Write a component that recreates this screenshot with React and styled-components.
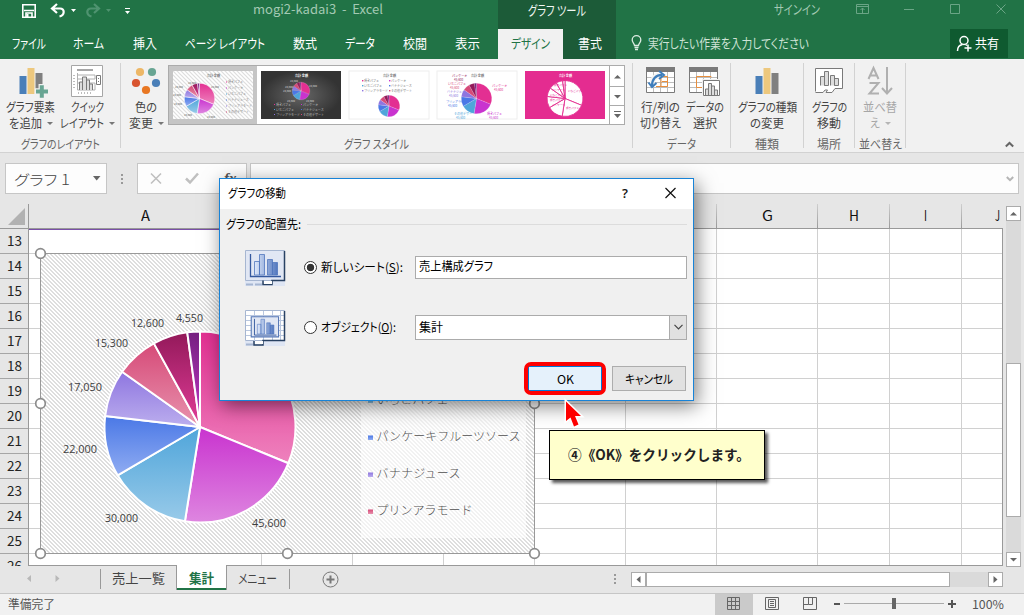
import React, { useLayoutEffect, useRef, useState } from "react";
import styled, { createGlobalStyle, css } from "styled-components";

const Global = createGlobalStyle`
  * { box-sizing: border-box; }
  html, body { margin: 0; padding: 0; overflow: hidden; background: #e6e6e6; }
  body { font-family: "Open Sans", "Noto Sans CJK JP", sans-serif; font-size: 12px; color: #444; }
`;

/* Text condensed or widened to a fixed run width, like the UI font's narrow kana */
const FitBox = styled.span`
  display: block;
  flex: none;
  width: ${(p) => p.$w}px;
  height: 16px;
  line-height: 16px;
  white-space: nowrap;
  font-family: "Noto Sans CJK JP", sans-serif;
  font-size: ${(p) => p.$size || 12}px;
  font-weight: ${(p) => p.$weight || 400};
  color: ${(p) => p.$color || "inherit"};
  font-feature-settings: ${(p) => (p.$full ? "normal" : '"palt"')};
`;
const FitInner = styled.span`
  display: inline-block;
  transform-origin: 0 50%;
  white-space: pre;
`;
function Fit({ w, size, weight, color, full, children }) {
  const ref = useRef(null);
  const [k, setK] = useState(1);
  useLayoutEffect(() => {
    if (ref.current.offsetWidth) setK(w / ref.current.getBoundingClientRect().width);
  }, []);
  return (
    <FitBox $w={w} $size={size} $weight={weight} $color={color} $full={full}>
      <FitInner ref={ref} style={{ transform: `scaleX(${k})` }}>{children}</FitInner>
    </FitBox>
  );
}

const Window = styled.div`
  position: relative;
  width: 1024px;
  height: 615px;
  overflow: hidden;
  display: flex;
  flex-direction: column;
  background: #e6e6e6;
`;
const Icon = styled.svg`
  display: block;
  flex: none;
  overflow: visible;
`;

/* ---------- title and tabs ---------- */
const TitleBar = styled.header`
  display: flex;
  height: 29px;
  background: #217346;
`;
const QuickAccess = styled.div`
  width: 253px;
`;
const TitleText = styled.div`
  width: 245px;
  padding-top: 1px;
`;
const ToolTitle = styled.div`
  width: 118px;
  padding-top: 2px;
  display: flex;
  justify-content: center;
  background: #1c5b38;
`;
const SignIn = styled.div`
  width: 204px;
  padding: 1px 0 0 158px;
`;
const TabBar = styled.nav`
  display: flex;
  height: 30px;
  background: #217346;
`;
const Tab = styled.div`
  width: ${(p) => p.$w}px;
  height: 30px;
  display: flex;
  justify-content: center;
  padding-top: 6px;
  margin-left: ${(p) => p.$gap || 0}px;
  color: #fff;
  ${(p) => p.$tone === "active" && css`background: #f1f1f1; color: #217346;`}
  ${(p) => p.$tone === "dark" && css`background: #1c5b38;`}
`;
const TellMe = styled.div`
  display: flex;
  width: 334px;
  padding: 6px 0 0 15px;
  gap: 6px;
`;
const Share = styled.div`
  display: flex;
  width: 58px;
  height: 29px;
  padding: 6px 0 0 6px;
  gap: 3px;
  background: #0f5a30;
`;

/* ---------- ribbon ---------- */
const Ribbon = styled.section`
  display: flex;
  height: 94px;
  background: #f1f1f1;
  border-bottom: 1px solid #d2d2d2;
  padding-top: 4px;
  position: relative;
`;
const Group = styled.div`
  width: ${(p) => p.$w}px;
  height: 85px;
  border-right: 1px solid #d2d2d2;
  display: flex;
  flex-direction: column;
  align-items: center;
`;
const Tools = styled.div`
  display: flex;
  flex: none;
  width: 100%;
  height: 73px;
  justify-content: ${(p) => (p.$center ? "center" : "flex-start")};
`;
const Tool = styled.div`
  width: ${(p) => p.$w}px;
  padding-left: ${(p) => p.$pl || 0}px;
  display: flex;
  flex-direction: column;
  align-items: center;
  color: ${(p) => (p.$off ? "#a6a6a6" : "#444")};
`;
const ToolIcon = styled.div`
  height: 36px;
`;
const ToolLine = styled.div`
  display: flex;
  align-items: center;
  height: 16px;
  gap: 5px;
`;
const Caret = styled.i`
  border: 3px solid transparent;
  border-top-color: ${(p) => p.$c || "#777"};
  border-bottom: 0;
`;
const Gallery = styled.div`
  display: flex;
  width: 457px;
  height: 60px;
  margin-top: 2px;
  border: 1px solid #ababab;
  background: #fff;
`;
const Thumb = styled.div`
  width: 88px;
  height: 58px;
  padding: 5px 4px;
  background: ${(p) => (p.$on ? "#c5c5c5" : "#fff")};
`;
const GalleryNav = styled.div`
  width: 15px;
  margin-left: auto;
  border-left: 1px solid #ababab;
  display: grid;
  grid-template-rows: 21px 19px 1fr;
`;
const NavCell = styled.div`
  display: flex;
  align-items: center;
  justify-content: center;
  border-bottom: ${(p) => (p.$last ? 0 : "1px solid #ababab")};
`;
const Collapse = styled.div`
  padding: 76px 0 0 99px;
`;

/* ---------- formula bar ---------- */
const FormulaBar = styled.section`
  display: flex;
  height: 51px;
  padding: 10px 5px 0;
`;
const Box = styled.div`
  display: flex;
  align-items: center;
  width: ${(p) => p.$w}px;
  height: 31px;
  margin-right: ${(p) => p.$mr || 0}px;
  border: 1px solid #c6c6c6;
  background: #fdfdfd;
  padding-left: 8px;
`;
const Spacer = styled.div`
  flex: 1;
`;

/* ---------- sheet ---------- */
const SheetArea = styled.main`
  position: relative;
  display: flex;
  height: 362px;
`;
const RowHeads = styled.div`
  width: 29px;
  height: 362px;
  overflow: hidden;
  border-right: 1px solid #999;
`;
const Corner = styled.div`
  height: 25px;
  border-bottom: 1px solid #999;
  padding: 4px 0 0 8px;
`;
const RowHead = styled.div`
  height: 25px;
  padding: 3px 0 0 7px;
  border-bottom: 1px solid #a6a6a6;
  color: #222;
`;
const SheetMain = styled.div`
  width: 974px;
`;
const ColHeads = styled.div`
  display: flex;
  height: 25px;
  overflow: hidden;
  border-bottom: 1px solid #999;
`;
const ColHead = styled.div`
  flex: none;
  width: ${(p) => p.$w}px;
  display: flex;
  justify-content: center;
  padding-top: 3px;
  color: #111;
  border-right: 1px solid;
  border-image: linear-gradient(#d0d0d0, #999) 1;
`;
const Cells = styled.div`
  height: 337px;
  overflow: hidden;
  background: #fff;
  border-right: 1px solid #999;
  border-bottom: 1px solid #999;
  display: grid;
  grid-template-columns: 233px 91px 91px 91px 91px 91px 101px 72px 72px 72px;
  grid-auto-rows: 25px;
`;
const Cell = styled.div`
  border-right: 1px solid #d0d0d0;
  border-bottom: 1px solid #d0d0d0;
`;
const RangeEdge = styled.div`
  position: absolute;
  left: 29px;
  top: 25px;
  width: 520px;
  height: 1px;
  background: #7a4fa8;
`;
const ChartObject = styled.div`
  position: absolute;
  left: 40px;
  top: 49px;
`;
const VScroll = styled.div`
  width: 15px;
  height: 361px;
  margin: 2px 0 0 3px;
  display: flex;
  flex-direction: column;
  background: #dadada;
`;
const ScrollButton = styled.div`
  flex: none;
  width: 15px;
  height: 15px;
  display: flex;
  align-items: center;
  justify-content: center;
  background: #fff;
  border: 1px solid #ababab;
`;
const VThumb = styled.div`
  height: 154px;
  margin: 142px 0 auto;
  background: #fff;
  border: 1px solid #ababab;
`;

/* ---------- sheet tabs ---------- */
const SheetTabs = styled.div`
  display: flex;
  height: 27px;
`;
const SheetArrows = styled.div`
  width: 100px;
  height: 24px;
  padding: 8px 0 0 26px;
`;
const SheetTab = styled.div`
  width: ${(p) => p.$w}px;
  height: 24px;
  padding: 4px 0 0 ${(p) => p.$pl}px;
  position: relative;
  ${(p) =>
    p.$on &&
    css`
      margin-top: -1px;
      padding-top: 5px;
      height: 25px;
      background: #fff;
      border: solid #999;
      border-width: 0 1px;
      box-shadow: inset 0 -2px #217346;
    `}
`;
const TabRule = styled.div`
  width: 1px;
  height: 20px;
  margin-top: 3px;
  background: #999;
`;
const AddSheet = styled.div`
  padding: 5px 0 0 32px;
  width: 324px;
`;
const HScroll = styled.div`
  display: flex;
  width: 372px;
  height: 15px;
  margin: 6px 0 0 15px;
  background: #dadada;
`;
const HThumb = styled.div`
  width: 304px;
  margin-right: auto;
  background: #fff;
  border: 1px solid #ababab;
`;
const StatusBar = styled.footer`
  display: flex;
  height: 22px;
  background: #f1f1f1;
  border-top: 1px solid #c6c6c6;
`;
const StatusText = styled.div`
  width: 715px;
  padding: 2px 0 0 8px;
  color: #555;
`;
const ViewButton = styled.div`
  width: 38px;
  padding: 3px 0 0 12px;
  background: ${(p) => (p.$on ? "#cacaca" : "transparent")};
`;
const Zoom = styled.div`
  display: flex;
  padding: 2px 0 0 8px;
  gap: 15px;
  color: #555;
`;

/* ---------- dialog ---------- */
const Dialog = styled.div`
  position: absolute;
  left: 219px;
  top: 178px;
  width: 475px;
  height: 223px;
  border: 1px solid #1883d7;
  background: #f0f0f0;
  color: #000;
  box-shadow: 3px 5px 18px rgba(0, 0, 0, 0.5);
`;
const DialogTitle = styled.div`
  display: flex;
  height: 30px;
  padding: 6px 17px 0 8px;
  background: #fff;
`;
const SectionTitle = styled.div`
  display: flex;
  align-items: center;
  height: 30px;
  margin-bottom: -2px;
  padding: 0 6px;
  gap: 6px;
`;
const Rule = styled.div`
  flex: 1;
  height: 1px;
  background: #dcdcdc;
`;
const Option = styled.div`
  display: flex;
  align-items: center;
  height: 60px;
  padding-left: 25px;
`;
const OptionPicture = styled.div`
  padding-top: 2px;
`;
const Radio = styled.span`
  width: 13px;
  height: 13px;
  margin: 0 4px 0 19px;
  border: 1px solid #333;
  border-radius: 50%;
  background: ${(p) => (p.$on ? "radial-gradient(#333 0 3.4px, #fff 4.1px)" : "#fff")};
`;
const OptionLabel = styled.div`
  width: 94px;
`;
const Field = styled.div`
  display: flex;
  width: 272px;
  height: ${(p) => p.$h}px;
  border: 1px solid #ababab;
  background: #fff;
  padding: ${(p) => p.$pt}px 0 0 3px;
`;
const DropButton = styled.div`
  width: 18px;
  height: ${(p) => p.$h}px;
  margin: -4px -1px 0 auto;
  display: flex;
  align-items: center;
  justify-content: center;
  background: #e1e1e1;
  border: 1px solid #ababab;
`;
const Actions = styled.div`
  display: flex;
  justify-content: flex-end;
  padding: 5px 7px 0 0;
  gap: 6px;
`;
const OkRing = styled.div`
  width: 82px;
  height: 33px;
  border: 4px solid #fe0000;
  border-radius: 7px;
  background: #0078d7;
  padding: 1px;
`;
const Button = styled.div`
  display: flex;
  align-items: center;
  justify-content: center;
  width: ${(p) => p.$w}px;
  height: ${(p) => p.$h}px;
  margin-top: ${(p) => p.$mt || 0}px;
  background: ${(p) => (p.$primary ? "#e5f1fb" : "#e1e1e1")};
  border: ${(p) => (p.$primary ? 0 : "1px solid #adadad")};
`;
const Callout = styled.div`
  position: absolute;
  left: 549px;
  top: 430px;
  width: 216px;
  height: 50px;
  display: flex;
  align-items: center;
  padding: 0 0 2px 18px;
  color: #222;
  background: #ffffcc;
  border: 1px solid #000;
  box-shadow: 3px 3px 3px rgba(0, 0, 0, 0.65);
`;
const Pointer = styled.svg`
  position: absolute;
  left: 563px;
  top: 397px;
`;

/* ---------- drawings ---------- */
const slices = [
  [66700, "#e32f92", "#ee82bd"],
  [45600, "#c933cf", "#de86e0"],
  [30000, "#4fa5da", "#98cae9"],
  [22000, "#4a78e6", "#90acf2"],
  [17050, "#8e76e0", "#bcaeee"],
  [15300, "#d64a78", "#e893ae"],
  [12600, "#93195a", "#e23d98"],
  [4550, "#752080", "#c33bc9"],
];
function wedges(cx, cy, r) {
  const total = slices.reduce((s, x) => s + x[0], 0);
  let a = 0;
  return slices.map(([v]) => {
    const b = a + (v / total) * 2 * Math.PI;
    const d = `M${cx} ${cy}L${cx + r * Math.sin(a)} ${cy - r * Math.cos(a)}A${r} ${r} 0 0 1 ${cx + r * Math.sin(b)} ${cy - r * Math.cos(b)}Z`;
    a = b;
    return d;
  });
}
function Pie({ cx, cy, r, grad, mono, sw = 0 }) {
  return wedges(cx, cy, r).map((d, i) => (
    <path key={i} d={d} fill={mono || (grad ? `url(#slice${i})` : slices[i][1])} stroke={mono ? "#e42c90" : "#fff"} strokeWidth={sw} strokeLinejoin="round" />
  ));
}

const dataLabels = [
  ["4,550", 176, 318, 27],
  ["12,600", 131, 323, 33],
  ["15,300", 95, 343, 33],
  ["17,050", 68, 387, 34],
  ["22,000", 63, 449, 34],
  ["30,000", 105, 518, 33],
  ["45,600", 252, 523, 34],
];
const legend = [
  ["いちごパフェ", 399, 72, 2],
  ["パンケーキフルーツソース", 436, 144, 3],
  ["バナナジュース", 473, 84, 4],
  ["プリンアラモード", 510, 96, 5],
];
const handles = [[40, 253], [40, 403], [40, 553], [287, 553], [534, 403], [534, 553]];

function PieChart() {
  return (
    <Icon width="495" height="301" viewBox="40 253 495 301">
      <defs>
        <pattern id="hatch" width="4" height="4" patternUnits="userSpaceOnUse">
          <rect width="4" height="4" fill="#fff" />
          <path d="M0 0h2v1h-2zM1 1h2v1h-2zM2 2h2v1h-2zM3 3h1v1h-1zM0 3h1v1h-1z" fill="#dedede" />
        </pattern>
        {slices.map(([, a, b], i) => (
          <linearGradient key={i} id={`slice${i}`} x1="0" y1="0" x2="0" y2="1">
            <stop offset="0" stopColor={a} />
            <stop offset="1" stopColor={b} />
          </linearGradient>
        ))}
      </defs>
      <rect x="40.5" y="253.5" width="494" height="300" fill="url(#hatch)" stroke="#999" />
      <rect x="361" y="285" width="165" height="253" fill="#fff" opacity="0.6" />
      <Pie cx={200} cy={427} r={95.5} grad sw={2} />
      <g fontFamily="'Open Sans', sans-serif" fontSize="11" fill="#404040">
        {dataLabels.map(([t, x, y, w]) => (
          <text key={t} x={x} y={y + 4} textLength={w} lengthAdjust="spacingAndGlyphs">{t}</text>
        ))}
      </g>
      <g fontFamily="'Noto Sans CJK JP', sans-serif" fontSize="12" fontWeight="300" fill="#505050">
        {legend.map(([t, y, w, i]) => (
          <g key={t}>
            <rect x="368" y={y - 0.5} width="5" height="4.5" fill={`url(#slice${i})`} />
            <text x="376.5" y={y + 5} textLength={w} lengthAdjust="spacing">{t}</text>
          </g>
        ))}
      </g>
      {handles.map(([x, y]) => (
        <circle key={`${x}-${y}`} cx={x + 0.5} cy={y + 0.5} r="4.8" fill="#fff" stroke="#8c8c8c" strokeWidth="1.7" />
      ))}
    </Icon>
  );
}

const styleNames = ["焼きパフェ", "パンケーキ", "いちごパフェ", "バナナジュース", "プリンアラモード", "その他デザート"];
function StyleThumb({ kind }) {
  const dark = kind === 1;
  const solid = kind === 4;
  const fg = dark || solid ? "#fff" : "#777";
  const pies = [[26.5, 27.5, 15.3], [40, 20, 8.8], [40, 35, 10.8], [39.5, 27.5, 15.3], [40, 27.5, 18]];
  const [cx, cy, r] = pies[kind];
  const spots = {
    0: [[38, 15, 0], [2, 15, 0], [0, 23, 0], [1, 32, 0], [11, 43, 0], [34, 45, 0], [15, 11, 0]],
    1: [[48, 14, 0], [24, 15, 0], [22, 19, 0], [26, 29, 0], [45, 29, 0], [29, 9, 0]],
    3: [[55, 14, 0], [11, 12, 5], [10, 20, 4], [9, 30, 3], [17, 42, 2], [50, 42, 1], [15, 4, 6]],
  }[kind] || [];
  return (
    <Icon width="80" height="48" viewBox="0 0 80 48">
      <defs>
        <radialGradient id="darkbg"><stop offset="0" stopColor="#666" /><stop offset="1" stopColor="#333" /></radialGradient>
        <pattern id="thumbHatch" width="4" height="4" patternUnits="userSpaceOnUse">
          <rect width="4" height="4" fill="#fff" />
          <path d="M-1 -1L5 5M-1 3L1 5M3 -1L5 1" stroke="#dedede" strokeWidth="1.2" />
        </pattern>
      </defs>
      <rect width="80" height="48" fill={["url(#thumbHatch)", "url(#darkbg)", "#fff", "#fff", "#e42c90"][kind]} stroke={kind > 1 && !solid ? "#eee" : "none"} />
      <Pie cx={cx} cy={cy} r={r} mono={solid && "#fff"} grad={kind === 0} sw={solid ? 0.9 : kind === 0 ? 0.5 : 0.15} />
      <g fontFamily="'Noto Sans CJK JP', sans-serif" fontSize="3">
        <text x="34" y="5.5" fontSize="3.6" fontWeight="700" textLength="13" lengthAdjust="spacingAndGlyphs" fill={fg}>合計 金額</text>
        {kind === 0 && styleNames.map((n, i) => (
          <g key={n}><rect x="53" y={10.5 + i * 6} width="1" height="1" fill={slices[i][1]} /><text x="55" y={12 + i * 6} fill="#888">{n}</text></g>
        ))}
        {kind === 1 && styleNames.map((n, i) => (
          <g key={n}><rect x={13 + (i % 2) * 27} y={33 + (i >> 1) * 5} width="1" height="1" fill={slices[i][1]} /><text x={15 + (i % 2) * 27} y={35 + (i >> 1) * 5} fill="#bbb">{n}</text></g>
        ))}
        {kind === 2 && styleNames.map((n, i) => (
          <g key={n}><rect x={13 + (i % 2) * 27} y={9 + (i >> 1) * 5} width="1.4" height="1.4" fill={slices[i][1]} /><text x={15 + (i % 2) * 27} y={11 + (i >> 1) * 5} fill="#777">{n}</text></g>
        ))}
        {spots.map(([x, y, c], i) => (
          <text key={i} x={x} y={y + 2} fontSize={kind === 3 ? 3 : 2.6} fill={kind === 3 ? slices[c][1] : dark ? "#ddd" : "#555"}>{kind === 3 ? styleNames[(i + 1) % 6].slice(0, 6) : "15,300"}</text>
        ))}
        {kind === 3 && spots.map(([x, y, c], i) => <text key={`v${i}`} x={x + 2} y={y + 5.500} fill={slices[c][1]}>45,600</text>)}
        {solid && [[29, 15], [27, 20], [25, 25], [25, 30], [27, 35], [43, 21], [41, 38], [32, 11]].map(([x, y], i) => (
          <text key={i} x={x} y={y} fontSize="2.6" fill="#e42c90">{styleNames[i % 3]}</text>
        ))}
      </g>
    </Icon>
  );
}

const Bars = ({ plus }) => (
  <Icon width="32" height="32">
    <path d="M4.500 13h7v18h-7z" fill="#4a7fb8" /><path d="M12.500 5h7v26h-7z" fill="#edc87e" /><path d="M20.500 10h7v21h-7z" fill="#808080" />
    {plus && <><path d="M21 26.500h3.800v-4.300h4v4.300H33v4h-4.200v4.300h-4v-4.300H21z" fill="#f1f1f1" stroke="#f1f1f1" strokeWidth="2.500" /><path d="M21 26.500h3.800v-4.300h4v4.300H33v4h-4.200v4.300h-4v-4.300H21z" fill="#68a593" /></>}
  </Icon>
);
const QuickLayout = () => (
  <Icon width="33" height="32" fill="none" stroke="#7a7a7a">
    <path d="M.5 2.500h31v31H.5z" fill="#fff" stroke="#a6a6a6" /><path d="M6 7h16" stroke="#a6a6a6" strokeWidth="2" />
    <path d="M6.500 10v17H24M6 12h18v4M6 16h18M6 20h18v7" stroke="#b0b0b0" /><path d="M8.500 27v-8h3v8M11.500 27V14h4v13M15.500 27V17h3v10M18.500 27v-6h3v6" fill="#ddd" />
    <path d="M25.500 12.500h4v9h-4zM27 15.500h1M27 18.500h1" /><path d="M3 12v15M7 30h14" strokeDasharray="1 2" />
  </Icon>
);
const ColorDots = () => (
  <Icon width="32" height="32">
    <circle cx="10" cy="9" r="4.100" fill="#edb766" /><circle cx="22" cy="9" r="4.100" fill="#68a593" /><circle cx="6" cy="20" r="4.100" fill="#d8542f" />
    <circle cx="26" cy="20" r="4.100" fill="#4a7fb8" /><circle cx="16" cy="27" r="4.100" fill="#e87722" />
  </Icon>
);
const TableBase = ({ w = 28 }) => (
  <g fill="none">
    <path d={`M.5 4.500h${w}v25H.5z`} fill="#fff" stroke="#7a7a7a" /><path d={`M0 4h${w + 1}v5H0z`} fill="#7a7a7a" />
    <path d={`M7.500 9v20M14.500 9v20M21.500 9v20M1 14.500h${w - 1}M1 19.500h${w - 1}M1 24.500h${w - 1}`} stroke="#bdbdbd" />
  </g>
);
const SwapIcon = () => (
  <Icon width="30" height="32" fill="none">
    <TableBase />
    <path d="M10 23.500h11.500V13.500H15v10M16 18.500h5.500" stroke="#e88e3c" />
    <path d="M6 22C6 15 10 12 16 12" stroke="#f4f4f4" strokeWidth="5" /><path d="M6 23C6 16 10 12 16 12" stroke="#3f7ebc" strokeWidth="2.300" />
    <path d="M13 8l5 4-5 4M2.500 19.500L6 24l4.500-4" stroke="#3f7ebc" strokeWidth="2" />
  </Icon>
);
const SelectIcon = () => (
  <Icon width="32" height="32" fill="none">
    <TableBase /><path d="M22 14.500V13.500H7.500v11H14" stroke="#e88e3c" />
    <path d="M13 16h18v18H13z" fill="#f1f1f1" /><path d="M14.500 17.500h16v15h-16z" fill="#fff" stroke="#7a7a7a" />
    <path d="M16.500 32v-6h3v6M19.500 32V20.500h3V32M22.500 32v-9h3v9M25.500 32v-5h3v5" fill="#ddd" stroke="#7a7a7a" />
  </Icon>
);
const MoveIcon = () => (
  <Icon width="28" height="32" fill="none" stroke="#7a7a7a">
    <path d="M.5 28.500V5.500h27v20H20l-3 4h-6l1.500-2.500H10L8 29.500H.5" fill="#fff" /><path d="M5.500 22.500v-9h4v9M9.500 22.500V8.500h4v14h-4M15.500 22.500v-10h4v10M19.500 22.500v-7h4v7z" fill="#ddd" />
  </Icon>
);
const SortIcon = () => (
  <Icon width="26" height="32" fill="none" stroke="#b0b0b0" strokeWidth="2">
    <path d="M1.500 16L6.500 5l5 11M3 12.500h7M2.500 20h9l-9 10.500h9.500" /><path d="M20 4v26M15 25l5 5.500 5-5.500" />
  </Icon>
);
const SheetIcon = ({ object }) => (
  <Icon width="40" height="36" fill="none">
    <defs><linearGradient id="bar"><stop offset="0" stopColor="#dfe9fb" /><stop offset="1" stopColor="#5277be" /></linearGradient></defs>
    <path d="M0 31h40v5H0z" fill="#dfe6f4" /><path d="M.5.5h39v30H.5z" fill={object ? "#fff" : "#e1e7f4"} stroke="#a6b6d1" />
    {object && <path d="M9.500 1v30M18.500 1v30M27.500 1v30M35.500 1v30M1 5.500h38M1 10.500h38M1 15.500h38M1 20.500h38M1 25.500h38" stroke="#b9c7df" />}
    <path d={object ? "M39.500 1v29.500H18V35h-9v-4" : "M39.500 1v29.500H27V34.500h-9v-4"} stroke="#294263" strokeWidth="1.500" />
    <path d={object ? "M10 31h8v3h-8z" : "M19 31h8v3h-8z"} fill="#fff" /><path d={object ? "M1 34.500h7" : "M1 34.500h7M10 34.500h7"} stroke="#a6b6d1" strokeWidth="2" />
    <g transform={object ? "translate(5.500 6) scale(.72)" : ""}>
      {object && <path d="M1 1h38v28H1z" fill="#e1e7f4" stroke="#5476b5" strokeWidth="1.500" />}
      <path d="M5.500 4v22.500H36" stroke="#35599f" strokeWidth="1.300" />
      <path d="M9.500 11.500h5V25h-5zM14.500 4.500h5V25h-5zM22.500 9.500h5V25h-5zM27.500 12.500h5V25h-5z" fill="url(#bar)" stroke="#5277be" strokeWidth=".8" />
    </g>
  </Icon>
);
const Triangle = ({ dir, c = "#666" }) => (
  <Icon width="7" height="7" fill={c}><path d={{ up: "M0 5.500h7L3.500 2z", down: "M0 2h7L3.500 5.500z", left: "M5.500 0v7L1.500 3.500z", right: "M1.500 0v7L5.500 3.500z" }[dir]} /></Icon>
);

const columns = [["A", 233], ["B", 91], ["C", 91], ["D", 91], ["E", 91], ["F", 91], ["G", 101], ["H", 72], ["I", 72], ["J", 72]];
const letterWidths = { G: 11, H: 10, I: 3, J: 5 };
const tabs = [["ファイル", 58, 34], ["ホーム", 61, 31], ["挿入", 52, 24], ["ページ レイアウト", 107, 80], ["数式", 53, 24], ["データ", 58, 30], ["校閲", 52, 24], ["表示", 53, 25]];

export default function App() {
  return (
    <Window>
      <Global />
      <TitleBar>
        <QuickAccess>
          <Icon width="140" height="24" fill="none" stroke="#fff">
            <path d="M22.800 4.800h12.400v12.400H22.800z" strokeWidth="1.600" /><path d="M24 10.500h10M26 17v-4h6v4" strokeWidth="1.600" /><path d="M26.500 14h2v3h-2z" fill="#fff" stroke="none" />
            <path d="M57 4l-5 4.500L57 13M52.500 8.500H60c5 0 5 6.500-.5 8" strokeWidth="2.200" />
            <path d="M94 4l5 4.500L94 13M98.500 8.500H91c-5 0-5 6.500 .5 8" strokeWidth="2.200" stroke="#4f9370" />
            <path d="M71 9h5l-2.500 3zM125 11h5l-2.500 3z" fill="#fff" stroke="none" /><path d="M106 9h5l-2.500 3z" fill="#4f9370" stroke="none" /><path d="M125 8.500h5" />
          </Icon>
        </QuickAccess>
        <TitleText><Fit w={130} size={13} color="#a3c9b3">mogi2-kadai3  -  Excel</Fit></TitleText>
        <ToolTitle><Fit w={58} size={13} color="#f2f8f4">グラフ ツール</Fit></ToolTitle>
        <SignIn><Fit w={46} size={13} color="#a3c9b3">サインイン</Fit></SignIn>
        <Icon width="204" height="29" viewBox="820 0 204 29" fill="none" stroke="#6ba586">
          <path d="M856.500 4.500h12v9h-12zM857 6.500h11M862.500 13V8M860.500 10l2-2 2 2M904 9.500h10M950.500 4.500h9v9h-9zM996.500 4.500l9 9M1005.500 4.500l-9 9" />
        </Icon>
      </TitleBar>
      <TabBar>
        {tabs.map(([t, w, tw]) => <Tab key={t} $w={w}><Fit w={tw} size={13}>{t}</Fit></Tab>)}
        <Tab $w={65} $gap={4} $tone="active"><Fit w={39} size={13}>デザイン</Fit></Tab>
        <Tab $w={53} $tone="dark"><Fit w={24} size={13}>書式</Fit></Tab>
        <TellMe>
          <Icon width="11" height="16" fill="none" stroke="#dcebe2" strokeWidth="1.300"><path d="M3.500 10.500C3.500 8.500 1.200 7.500 1.200 5a4.300 4.300 0 0 1 8.600 0c0 2.500-2.300 3.500-2.300 5.500zM3.500 12.500h4M4 14.500h3" /></Icon>
          <Fit w={161} size={13} color="#cfe3d7">実行したい作業を入力してください</Fit>
        </TellMe>
        <Share>
          <Icon width="16" height="17" fill="none" stroke="#fff" strokeWidth="1.500"><circle cx="8" cy="5.500" r="4" /><path d="M1.500 16c0-3.500 2-6 5-6.500M9.500 9.500l1.500 1M8.500 13h7M12 9.500v7" /></Icon>
          <Fit w={24} size={13} color="#fff">共有</Fit>
        </Share>
      </TabBar>

      <Ribbon>
        <Group $w={121}>
          <Tools>
            <Tool $w={61}><ToolIcon><Bars plus /></ToolIcon><ToolLine><Fit w={49}>グラフ要素</Fit></ToolLine><ToolLine><Fit w={33}>を追加</Fit><Caret /></ToolLine></Tool>
            <Tool $w={53}><ToolIcon><QuickLayout /></ToolIcon><ToolLine><Fit w={33}>クイック</Fit></ToolLine><ToolLine><Fit w={44}>レイアウト</Fit><Caret /></ToolLine></Tool>
          </Tools>
          <Fit w={79} color="#666">グラフのレイアウト</Fit>
        </Group>
        <Group $w={512}>
          <Tools>
            <Tool $w={47} $pl={3}><ToolIcon><ColorDots /></ToolIcon><ToolLine><Fit w={22}>色の</Fit></ToolLine><ToolLine><Fit w={24}>変更</Fit><Caret /></ToolLine></Tool>
            <Gallery>
              {[0, 1, 2, 3, 4].map((k) => <Thumb key={k} $on={k === 0}><StyleThumb kind={k} /></Thumb>)}
              <GalleryNav>
                <NavCell><Triangle dir="up" /></NavCell><NavCell><Triangle dir="down" /></NavCell>
                <NavCell $last><Icon width="7" height="8" fill="#666"><path d="M0 0h7v1H0zM0 3h7L3.500 7z" /></Icon></NavCell>
              </GalleryNav>
            </Gallery>
          </Tools>
          <Fit w={65} color="#666">グラフ スタイル</Fit>
        </Group>
        <Group $w={98}>
          <Tools $center>
            <Tool $w={47}><ToolIcon><SwapIcon /></ToolIcon><ToolLine><Fit w={39}>行/列の</Fit></ToolLine><ToolLine><Fit w={41}>切り替え</Fit></ToolLine></Tool>
            <Tool $w={42}><ToolIcon><SelectIcon /></ToolIcon><ToolLine><Fit w={38}>データの</Fit></ToolLine><ToolLine><Fit w={24}>選択</Fit></ToolLine></Tool>
          </Tools>
          <Fit w={29} color="#666">データ</Fit>
        </Group>
        <Group $w={73}>
          <Tools $center><Tool $w={68}><ToolIcon><Bars /></ToolIcon><ToolLine><Fit w={59}>グラフの種類</Fit></ToolLine><ToolLine><Fit w={34}>の変更</Fit></ToolLine></Tool></Tools>
          <Fit w={24} color="#666">種類</Fit>
        </Group>
        <Group $w={51}>
          <Tools $center><Tool $w={48}><ToolIcon><MoveIcon /></ToolIcon><ToolLine><Fit w={35}>グラフの</Fit></ToolLine><ToolLine><Fit w={24}>移動</Fit></ToolLine></Tool></Tools>
          <Fit w={24} color="#666">場所</Fit>
        </Group>
        <Group $w={51}>
          <Tools $center><Tool $w={48} $off><ToolIcon><SortIcon /></ToolIcon><ToolLine><Fit w={34}>並べ替</Fit></ToolLine><ToolLine><Fit w={10}>え</Fit><Caret $c="#b5b5b5" /></ToolLine></Tool></Tools>
          <Fit w={43} color="#666">並べ替え</Fit>
        </Group>
        <Collapse><Icon width="9" height="9" fill="none" stroke="#666" strokeWidth="2"><path d="M.8 7.500L4.500 4l3.700 3.500" /></Icon></Collapse>
      </Ribbon>

      <FormulaBar>
        <Box $w={102} $mr={14}><Fit w={56} size={14} weight={300} color="#444">グラフ 1</Fit><Spacer /><Icon width="13" height="8" fill="#666"><path d="M0 1h7.500L3.700 5.500z" /></Icon></Box>
        <Icon width="16" height="31" fill="#999"><path d="M0 11h2v2H0zM0 15h2v2H0zM0 19h2v2H0z" /></Icon>
        <Box $w={110} $mr={3}>
          <Icon width="100" height="29" fill="none" stroke="#c0c0c0" strokeWidth="1.600"><path d="M5 9.500l10 10M15 9.500l-10 10" /><path d="M40 14.500l4 4 8-9" strokeWidth="2.500" /><text x="78" y="19" fontFamily="Liberation Serif" fontStyle="italic" fontWeight="700" fontSize="15" fill="#555" stroke="none">fx</text></Icon>
        </Box>
        <Box $w={769}><Spacer /><Icon width="12" height="8" fill="none" stroke="#b5b5b5" strokeWidth="2"><path d="M.8 2L4 5.200 7.200 2" /></Icon></Box>
      </FormulaBar>

      <SheetArea>
        <RowHeads>
          <Corner><Icon width="18" height="17" fill="#b2b2b2"><path d="M17 0v17H0z" /></Icon></Corner>
          {Array.from({ length: 14 }, (_, i) => <RowHead key={i}><Fit w={15} size={14}>{13 + i}</Fit></RowHead>)}
        </RowHeads>
        <SheetMain>
          <ColHeads>{columns.map(([c, w]) => <ColHead key={c} $w={w}><Fit w={letterWidths[c] || 9} size={14}>{c}</Fit></ColHead>)}</ColHeads>
          <Cells>{Array.from({ length: 140 }, (_, i) => <Cell key={i} />)}</Cells>
        </SheetMain>
        <RangeEdge />
        <ChartObject><PieChart /></ChartObject>
        <VScroll>
          <ScrollButton><Triangle dir="up" /></ScrollButton>
          <VThumb />
          <ScrollButton><Triangle dir="down" /></ScrollButton>
        </VScroll>
      </SheetArea>

      <SheetTabs>
        <SheetArrows><Icon width="36" height="10" fill="#b8b8b8"><path d="M5 1v7L1 4.500zM29.500 1v7l4-3.500z" /></Icon></SheetArrows>
        <TabRule />
        <SheetTab $w={75} $pl={11}><Fit w={53} size={13}>売上一覧</Fit></SheetTab>
        <SheetTab $w={51} $pl={12} $on><Fit w={25} size={13} weight={700} color="#217346">集計</Fit></SheetTab>
        <SheetTab $w={62} $pl={11}><Fit w={39} size={13}>メニュー</Fit></SheetTab>
        <TabRule />
        <AddSheet><Icon width="17" height="17" fill="none" stroke="#777"><circle cx="8.500" cy="8.500" r="7.500" /><path d="M4.500 8.500h8M8.500 4.500v8" strokeWidth="2" /></Icon></AddSheet>
        <Icon width="2" height="20" fill="#999"><path d="M0 8h2v2H0zM0 12h2v2H0zM0 16h2v2H0z" /></Icon>
        <HScroll><ScrollButton><Triangle dir="left" /></ScrollButton><HThumb /><ScrollButton><Triangle dir="right" /></ScrollButton></HScroll>
      </SheetTabs>
      <StatusBar>
        <StatusText><Fit w={47}>準備完了</Fit></StatusText>
        <ViewButton $on><Icon width="13" height="13" fill="none" stroke="#666"><path d="M.5.5h12v12H.5zM4.500 0v13M8.500 0v13M0 4.500h13M0 8.500h13" /></Icon></ViewButton>
        <ViewButton><Icon width="14" height="13" fill="none" stroke="#666"><path d="M.5.5h13v12H.5zM3.500 2.500h7v8h-7zM5 4.500h4M5 6.500h4M5 8.500h4" /></Icon></ViewButton>
        <ViewButton><Icon width="14" height="13" fill="none" stroke="#666"><path d="M.5.5h13v12H.5zM5.500 1v6.500H.5M5.500 7.500h4V1" /></Icon></ViewButton>
        <Zoom>
          <Icon width="120" height="18" viewBox="837 596 120 18"><path d="M834 603h6v2h-6zM948 603h8v2h-8zM951 600h2v8h-2z" fill="#555" /><path d="M844 603h100v1H844z" fill="#aaa" /><path d="M892 598h4v11h-4z" fill="#666" /></Icon>
          <Fit w={32}>100%</Fit>
        </Zoom>
      </StatusBar>

      <Dialog>
        <DialogTitle><Fit w={58}>グラフの移動</Fit><Spacer />
          <Icon width="56" height="18" fill="none" stroke="#111" strokeWidth="1.200"><text x="2" y="13" fontFamily="Open Sans" fontSize="13" fontWeight="600" fill="#111" stroke="none">?</text><path d="M45.500 3l10 10M55.500 3l-10 10" /></Icon>
        </DialogTitle>
        <SectionTitle><Fit w={75}>グラフの配置先:</Fit><Rule /></SectionTitle>
        <Option><OptionPicture><SheetIcon /></OptionPicture><Radio $on /><OptionLabel><Fit w={82}>新しいシート(<u>S</u>):</Fit></OptionLabel><Field $h={23} $pt={1}><Fit w={74}>売上構成グラフ</Fit></Field></Option>
        <Option><OptionPicture><SheetIcon object /></OptionPicture><Radio /><OptionLabel><Fit w={75}>オブジェクト(<u>O</u>):</Fit></OptionLabel>
          <Field $h={25} $pt={3}><Fit w={24}>集計</Fit><DropButton $h={25}><Icon width="9" height="6" fill="none" stroke="#444" strokeWidth="1.200"><path d="M.5.8l4 4 4-4" /></Icon></DropButton></Field></Option>
        <Actions>
          <OkRing><Button $w={72} $h={23} $primary><Fit w={17}>OK</Fit></Button></OkRing>
          <Button $w={74} $h={25} $mt={4}><Fit w={48}>キャンセル</Fit></Button>
        </Actions>
      </Dialog>
      <Callout><Fit w={182} size={14} weight={700} full>④《OK》をクリックします。</Fit></Callout>
      <Pointer width="22" height="32"><path d="M3 4.500V24l4.500-3.500 3.500 9 4.500-2-3.500-8.500h6z" fill="#fe0000" stroke="#fff" strokeWidth="3" paintOrder="stroke" /></Pointer>
    </Window>
  );
}
